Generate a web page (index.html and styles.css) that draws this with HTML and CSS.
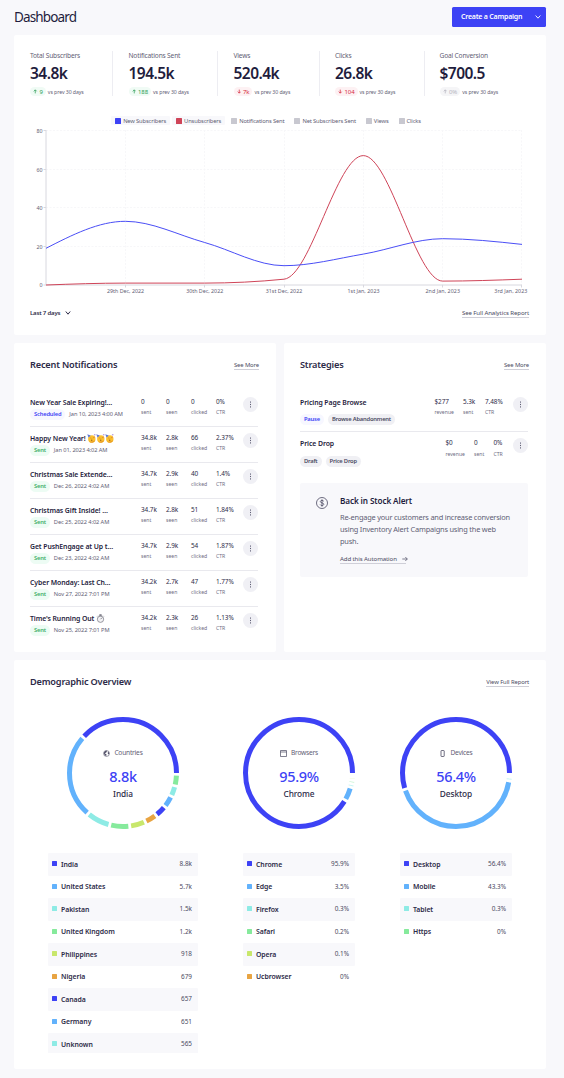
FILE: index.html
```html
<!DOCTYPE html>
<html lang="en">
<head>
<meta charset="utf-8">
<title>Dashboard</title>
<link rel="stylesheet" href="styles.css">
</head>
<body>
<svg class="defs" aria-hidden="true">
  <symbol id="party" viewBox="0 0 18 18">
    <circle cx="9.600" cy="9.800" r="7.400" fill="#fbc02f"/>
    <path d="M4 15a7.200 7.200 0 0 0 12.500-3c-3 3-8 4-12.500 3z" fill="#e79a24"/>
    <path d="M.5.500L7.500 3 3 7z" fill="#5d78d6"/>
    <path d="M13.500 1l3.500-.5-1 3z" fill="#8d6bd0"/>
    <path d="M6.500 8.500q1.200-1.500 2.400 0M11.500 8q1.200-1.500 2.400 0" fill="none" stroke="#a8691c" stroke-width="1"/>
    <circle cx="9.500" cy="12.500" r="1.300" fill="#9a5a1a"/>
    <circle cx="15" cy="6" r="1" fill="#e2774c"/>
  </symbol>
  <symbol id="watch" viewBox="0 0 16 16">
    <circle cx="8" cy="9.300" r="5.600" fill="#f4f4f6" stroke="#85858f" stroke-width="1.500"/>
    <path d="M6.500 1h3v2.500h-3zM12.500 3l1.500 1.500M3.500 3L2 4.500" fill="#85858f" stroke="#85858f" stroke-width="1.200"/>
    <path d="M8 9.300L10.800 6.500" stroke="#55555f" stroke-width="1.200"/>
  </symbol>
  <symbol id="dots" viewBox="0 0 15 15">
    <path d="M7.500 4.500v1.200M7.500 6.900v1.200M7.500 9.300v1.200" stroke="#5f5e75" stroke-width="1"/>
  </symbol>
  <symbol id="up" viewBox="0 0 6 6"><path d="M3 5.500V.8M1 2.800L3 .8l2 2" fill="none" stroke="currentColor"/></symbol>
  <symbol id="down" viewBox="0 0 6 6"><path d="M3 .5v4.700M1 3.200l2 2 2-2" fill="none" stroke="currentColor"/></symbol>
</svg>

<header class="topbar">
  <h1>Dashboard</h1>
  <button class="create"><span>Create a Campaign</span><svg width="6" height="6" viewBox="0 0 6 6"><path d="M.6 1.500L3 4.200 5.400 1.500" fill="none" stroke="#fff" stroke-width=".9"/></svg></button>
</header>

<main>
<section class="card analytics">
  <div class="kpis">
    <div class="kpi k1"><p>Total Subscribers</p><strong>34.8k</strong><div class="trend good"><b><svg><use href="#up"/></svg>9</b><span>vs prev 30 days</span></div></div>
    <div class="kpi k2"><p>Notifications Sent</p><strong>194.5k</strong><div class="trend good"><b><svg><use href="#up"/></svg>188</b><span>vs prev 30 days</span></div></div>
    <div class="kpi k3"><p>Views</p><strong>520.4k</strong><div class="trend bad"><b><svg><use href="#down"/></svg>7k</b><span>vs prev 30 days</span></div></div>
    <div class="kpi k4"><p>Clicks</p><strong>26.8k</strong><div class="trend bad"><b><svg><use href="#down"/></svg>104</b><span>vs prev 30 days</span></div></div>
    <div class="kpi k5"><p>Goal Conversion</p><strong>$700.5</strong><div class="trend flat"><b><svg><use href="#up"/></svg>0%</b><span>vs prev 30 days</span></div></div>
  </div>
  <div class="legend">
    <span class="on"><i class="c-blue"></i>New Subscribers</span>
    <span class="on"><i class="c-red"></i>Unsubscribers</span>
    <span><i></i>Notifications Sent</span>
    <span><i></i>Net Subscribers Sent</span>
    <span><i></i>Views</span>
    <span><i></i>Clicks</span>
  </div>
  <svg class="chart" viewBox="30 126 500 172">
    <g class="gridlines">
      <path d="M46 130.500H522M46 169.500H522M46 207.500H522M46 246.500H522M125.500 130V285M204.500 130V285M284.500 130V285M363.500 130V285M442.500 130V285M521.500 130V285"/>
    </g>
    <path class="axis" d="M46 130V285H522M43.500 130.500H46M43.500 169.500H46M43.500 207.500H46M43.500 246.500H46M43.500 285H46M125.500 285v2.500M204.500 285v2.500M284.500 285v2.500M363.500 285v2.500M442.500 285v2.500M521.500 285v2.500"/>
    <path class="line red" d="M46 285C72.400 284 98.900 283.100 125.300 283.100L204.700 283.100C231.100 283.100 257.600 281.800 284 279.200C310.400 276.600 336.900 155.600 363.300 155.600C389.800 155.600 416.200 281.100 442.700 281.100C469.100 281.100 495.600 280.200 522 279.200"/>
    <path class="line blue" d="M46 248.300C72.400 234.800 98.900 221.300 125.300 221.300C151.800 221.300 178.200 235.100 204.700 242.500C231.100 249.900 257.600 265.700 284 265.700C310.400 265.700 336.900 258.600 363.300 254.100C389.800 249.600 416.200 238.700 442.700 238.700C469.100 238.700 495.600 241.500 522 244.400"/>
    <g class="ylab">
      <text x="42.500" y="133">80</text><text x="42.500" y="171.500">60</text><text x="42.500" y="210">40</text><text x="42.500" y="249">20</text><text x="42.500" y="287.200">0</text>
    </g>
    <g class="xlab">
      <text x="125.500" y="293" textLength="37">29th Dec, 2022</text><text x="204.700" y="293" textLength="37">30th Dec, 2022</text><text x="284" y="293" textLength="36.500">31st Dec, 2022</text><text x="363.500" y="293" textLength="32">1st Jan, 2023</text><text x="442.700" y="293" textLength="34.500">2nd Jan, 2023</text><text x="510.800" y="293" textLength="33">3rd Jan, 2023</text>
    </g>
  </svg>
  <div class="cardfoot">
    <span class="range">Last 7 days<svg width="6" height="6" viewBox="0 0 6 6"><path d="M.8 1.500L3 4.200 5.200 1.500" fill="none" stroke="#2d2b48"/></svg></span>
    <a class="link">See Full Analytics Report</a>
  </div>
</section>

<div class="pair">
<section class="card">
  <div class="head"><h2>Recent Notifications</h2><a class="link">See More</a></div>
  <ul class="rows">
    <li><div class="info"><h3>New Year Sale Expiring!…</h3><p><b class="tag sched">Scheduled</b>Jan 10, 2023 4:00 AM</p></div><dl><div><dt>0</dt><dd>sent</dd></div><div><dt>0</dt><dd>seen</dd></div><div><dt>0</dt><dd>clicked</dd></div><div><dt>0%</dt><dd>CTR</dd></div></dl><svg class="more"><use href="#dots"/></svg></li>
    <li><div class="info"><h3>Happy New Year! <svg class="emo"><use href="#party"/></svg><svg class="emo"><use href="#party"/></svg><svg class="emo"><use href="#party"/></svg></h3><p><b class="tag sent">Sent</b>Jan 01, 2023 4:02 AM</p></div><dl><div><dt>34.8k</dt><dd>sent</dd></div><div><dt>2.8k</dt><dd>seen</dd></div><div><dt>66</dt><dd>clicked</dd></div><div><dt>2.37%</dt><dd>CTR</dd></div></dl><svg class="more"><use href="#dots"/></svg></li>
    <li><div class="info"><h3>Christmas Sale Extende…</h3><p><b class="tag sent">Sent</b>Dec 26, 2022 4:02 AM</p></div><dl><div><dt>34.7k</dt><dd>sent</dd></div><div><dt>2.9k</dt><dd>seen</dd></div><div><dt>40</dt><dd>clicked</dd></div><div><dt>1.4%</dt><dd>CTR</dd></div></dl><svg class="more"><use href="#dots"/></svg></li>
    <li><div class="info"><h3>Christmas Gift Inside! …</h3><p><b class="tag sent">Sent</b>Dec 25, 2022 4:02 AM</p></div><dl><div><dt>34.7k</dt><dd>sent</dd></div><div><dt>2.8k</dt><dd>seen</dd></div><div><dt>51</dt><dd>clicked</dd></div><div><dt>1.84%</dt><dd>CTR</dd></div></dl><svg class="more"><use href="#dots"/></svg></li>
    <li><div class="info"><h3>Get PushEngage at Up t…</h3><p><b class="tag sent">Sent</b>Dec 23, 2022 4:02 AM</p></div><dl><div><dt>34.7k</dt><dd>sent</dd></div><div><dt>2.9k</dt><dd>seen</dd></div><div><dt>54</dt><dd>clicked</dd></div><div><dt>1.87%</dt><dd>CTR</dd></div></dl><svg class="more"><use href="#dots"/></svg></li>
    <li><div class="info"><h3>Cyber Monday: Last Ch…</h3><p><b class="tag sent">Sent</b>Nov 27, 2022 7:01 PM</p></div><dl><div><dt>34.2k</dt><dd>sent</dd></div><div><dt>2.7k</dt><dd>seen</dd></div><div><dt>47</dt><dd>clicked</dd></div><div><dt>1.77%</dt><dd>CTR</dd></div></dl><svg class="more"><use href="#dots"/></svg></li>
    <li><div class="info"><h3>Time's Running Out <svg class="emo"><use href="#watch"/></svg></h3><p><b class="tag sent">Sent</b>Nov 25, 2022 7:01 PM</p></div><dl><div><dt>34.2k</dt><dd>sent</dd></div><div><dt>2.3k</dt><dd>seen</dd></div><div><dt>26</dt><dd>clicked</dd></div><div><dt>1.13%</dt><dd>CTR</dd></div></dl><svg class="more"><use href="#dots"/></svg></li>
  </ul>
</section>

<section class="card">
  <div class="head"><h2>Strategies</h2><a class="link">See More</a></div>
  <ul class="rows strat">
    <li class="s1"><div class="info"><h3>Pricing Page Browse</h3><p><b class="tag sched">Pause</b><b class="tag gray">Browse Abandonment</b></p></div><dl><div><dt>$277</dt><dd>revenue</dd></div><div><dt>5.3k</dt><dd>sent</dd></div><div><dt>7.48%</dt><dd>CTR</dd></div></dl><svg class="more"><use href="#dots"/></svg></li>
    <li class="s2"><div class="info"><h3>Price Drop</h3><p><b class="tag gray">Draft</b><b class="tag gray">Price Drop</b></p></div><dl><div><dt>$0</dt><dd>revenue</dd></div><div><dt>0</dt><dd>sent</dd></div><div><dt>0%</dt><dd>CTR</dd></div></dl><svg class="more"><use href="#dots"/></svg></li>
  </ul>
  <div class="promo">
    <svg width="12" height="12" viewBox="0 0 12 12" fill="none" stroke="#4b4a62" stroke-width=".8"><circle cx="6" cy="6" r="5.500"/><path d="M7.800 4.300C7.300 3.200 4.400 3 4.300 4.600 4.300 6.300 7.800 5.500 7.800 7.300 7.700 9 4.500 8.800 4.100 7.500M6 2.300v7.400"/></svg>
    <div>
      <h3>Back in Stock Alert</h3>
      <p>Re-engage your customers and increase conversion<br>using Inventory Alert Campaigns using the web<br>push.</p>
      <a class="link">Add this Automation<svg width="6" height="6" viewBox="0 0 6 6"><path d="M.3 3h5M3.300 1l2 2-2 2" fill="none" stroke="#4b4a62" stroke-width=".7"/></svg></a>
    </div>
  </div>
</section>
</div>

<section class="card demo">
  <div class="head"><h2>Demographic Overview</h2><a class="link">View Full Report</a></div>
  <div class="cols">
    <div class="col">
      <div class="donut">
        <svg viewBox="-56 -56 112 112"><g transform="scale(1 -1)">
          <circle class="s-blue" r="53.500" pathLength="360" stroke-dasharray="136.500 360"/>
          <circle class="s-sky" r="53.500" pathLength="360" stroke-dasharray="88.400 360" stroke-dashoffset="-139.500"/>
          <circle class="s-teal" r="53.500" pathLength="360" stroke-dasharray="23.300 360" stroke-dashoffset="-230.900"/>
          <circle class="s-green" r="53.500" pathLength="360" stroke-dasharray="18.600 360" stroke-dashoffset="-257.200"/>
          <circle class="s-lime" r="53.500" pathLength="360" stroke-dasharray="14.200 360" stroke-dashoffset="-278.800"/>
          <circle class="s-orange" r="53.500" pathLength="360" stroke-dasharray="10.500 360" stroke-dashoffset="-296"/>
          <circle class="s-blue" r="53.500" pathLength="360" stroke-dasharray="10.200 360" stroke-dashoffset="-309.500"/>
          <circle class="s-sky" r="53.500" pathLength="360" stroke-dasharray="10.100 360" stroke-dashoffset="-322.700"/>
          <circle class="s-teal" r="53.500" pathLength="360" stroke-dasharray="8.800 360" stroke-dashoffset="-335.800"/>
          <circle class="s-green" r="53.500" pathLength="360" stroke-dasharray="9.400 360" stroke-dashoffset="-347.600"/>
        </g></svg>
        <div class="mid"><span><svg width="7" height="7" viewBox="0 0 14 14"><circle cx="7" cy="7" r="5.900" fill="#fff" stroke="#4b4a62" stroke-width="1.100"/><path d="M1.500 5.500L5 1.500 8 1.500 7 4.500 4.500 6 4.500 8 7 8.500 6.500 12 3.500 10.500zM10 3l2.500 3-1 3-2-2z" fill="#4b4a62"/></svg>Countries</span><strong>8.8k</strong><em>India</em></div>
      </div>
      <ul class="legendlist">
        <li><i class="c-blue"></i><b>India</b><span>8.8k</span></li>
        <li><i class="c-sky"></i><b>United States</b><span>5.7k</span></li>
        <li><i class="c-teal"></i><b>Pakistan</b><span>1.5k</span></li>
        <li><i class="c-green"></i><b>United Kingdom</b><span>1.2k</span></li>
        <li><i class="c-lime"></i><b>Philippines</b><span>918</span></li>
        <li><i class="c-orange"></i><b>Nigeria</b><span>679</span></li>
        <li><i class="c-blue"></i><b>Canada</b><span>657</span></li>
        <li><i class="c-sky"></i><b>Germany</b><span>651</span></li>
        <li><i class="c-teal"></i><b>Unknown</b><span>565</span></li>
      </ul>
    </div>
    <div class="col">
      <div class="donut">
        <svg viewBox="-56 -56 112 112"><g transform="scale(1 -1)">
          <circle class="s-blue" r="53.500" pathLength="360" stroke-dasharray="328 360"/>
          <circle class="s-sky" r="53.500" pathLength="360" stroke-dasharray="12 360" stroke-dashoffset="-331"/>
          <circle class="s-teal faint" r="53.500" pathLength="360" stroke-dasharray="1 360" stroke-dashoffset="-346"/>
          <circle class="s-green faint" r="53.500" pathLength="360" stroke-dasharray=".7 360" stroke-dashoffset="-350"/>
          <circle class="s-lime faint" r="53.500" pathLength="360" stroke-dasharray=".4 360" stroke-dashoffset="-353.700"/>
        </g></svg>
        <div class="mid"><span><svg width="7" height="7" viewBox="0 0 7 7"><path d="M.5.5h6v6h-6zM.5 2h6" fill="none" stroke="#4b4a62" stroke-width=".7"/></svg>Browsers</span><strong>95.9%</strong><em>Chrome</em></div>
      </div>
      <ul class="legendlist">
        <li><i class="c-blue"></i><b>Chrome</b><span>95.9%</span></li>
        <li><i class="c-sky"></i><b>Edge</b><span>3.5%</span></li>
        <li><i class="c-teal"></i><b>Firefox</b><span>0.3%</span></li>
        <li><i class="c-green"></i><b>Safari</b><span>0.2%</span></li>
        <li><i class="c-lime"></i><b>Opera</b><span>0.1%</span></li>
        <li><i class="c-orange"></i><b>Ucbrowser</b><span>0%</span></li>
      </ul>
    </div>
    <div class="col">
      <div class="donut">
        <svg viewBox="-56 -56 112 112"><g transform="scale(1 -1)">
          <circle class="s-blue" r="53.500" pathLength="360" stroke-dasharray="196.300 360"/>
          <circle class="s-sky" r="53.500" pathLength="360" stroke-dasharray="150.700 360" stroke-dashoffset="-199.300"/>
          <circle class="s-teal faint" r="53.500" pathLength="360" stroke-dasharray="1 360" stroke-dashoffset="-353"/>
        </g></svg>
        <div class="mid"><span><svg width="7" height="7" viewBox="0 0 7 7"><rect x="2" y=".5" width="3.200" height="6" rx=".5" fill="none" stroke="#4b4a62" stroke-width=".8"/></svg>Devices</span><strong>56.4%</strong><em>Desktop</em></div>
      </div>
      <ul class="legendlist">
        <li><i class="c-blue"></i><b>Desktop</b><span>56.4%</span></li>
        <li><i class="c-sky"></i><b>Mobile</b><span>43.3%</span></li>
        <li><i class="c-teal"></i><b>Tablet</b><span>0.3%</span></li>
        <li><i class="c-green"></i><b>Https</b><span>0%</span></li>
      </ul>
    </div>
  </div>
</section>
</main>
</body>
</html>
```
FILE: styles.css
```css
* { box-sizing: border-box; margin: 0; padding: 0; }
body {
  width: 564px; height: 1078px; overflow: hidden;
  background: #f8f8fb; color: #1f1d3d;
  font-family: "Noto Sans", "Open Sans", sans-serif;
  font-size: 6.500px; line-height: 10px; letter-spacing: 0;
  white-space: nowrap;
}
ul { list-style: none; }
svg { display: block; flex: none; }
.defs { width: 0; height: 0; position: absolute; }
em, i { font-style: normal; }

.topbar { display: flex; justify-content: space-between; align-items: center; height: 35px; padding: 0 18px 2px 14px; }
.create { margin-top: 1px; }
h1 { font-size: 13.500px; font-weight: 400; line-height: 16px; letter-spacing: -0.063em; }
.create {
  display: flex; align-items: center; width: 94px; height: 20px; border: 0; border-radius: 1.500px;
  background: #3d42f5; color: #fff; font: 600 7px/20px "Noto Sans", sans-serif; letter-spacing: -0.03em;
}
.create span { width: 83px; padding-left: 9px; text-align: left; }

main { display: flex; flex-direction: column; gap: 8px; padding: 0 18px 0 14px; }
.card { background: #fff; border-radius: 2px; }
.analytics { height: 300px; padding: 16px 17px 0 16px; }

.kpis { display: flex; height: 45px; }
.kpi { padding-left: 15.500px; border-right: 1px solid #ededf2; }
.kpi p { font-size: 6.600px; line-height: 10px; color: #5f5e75; letter-spacing: -0.025em; }
.kpi strong { display: block; font-size: 15.500px; line-height: 25px; height: 26px; font-weight: 600; letter-spacing: -0.035em; }
.k1 { width: 83px; padding-left: 0; }
.k2 { width: 105px; }
.k3 { width: 102px; }
.k4 { width: 105px; padding-left: 15px; }
.kpi.k5 { border: 0; padding-left: 14.500px; }
.trend { display: flex; align-items: center; gap: 2px; height: 9px; font-size: 5.200px; color: #5f5e75; letter-spacing: -0.015em; }
.trend b { display: flex; align-items: center; gap: 2px; height: 9px; padding: 0 3px; border-radius: 5px; font-weight: 400; font-size: 6px; }
.trend b svg { width: 4.500px; height: 5px; }
.good b { background: #f0fbf5; color: #2f9e55; }
.bad b { background: #fdf1f3; color: #d6293e; }
.flat b { background: #f5f5f7; color: #b4b3bf; }

.legend { display: flex; justify-content: center; gap: 2px; margin-top: 20px; height: 9px; padding-right: 23px; }
.legend span { display: flex; align-items: center; gap: 2px; height: 9px; padding: 0 4px; border-radius: 1px; font-size: 5.800px; letter-spacing: -0.028em; color: #5f5e75; }
.legend .on { background: #f8f8fb; }
.legend i { width: 6px; height: 6px; border-radius: .5px; background: #c8c8d0; }
.legend .c-blue, .c-blue { background: #3d42f5; }
.legend .c-red { background: #cf4458; }
.c-sky { background: #62b2fc; }
.c-teal { background: #8eebe5; }
.c-green { background: #86ea9c; }
.c-lime { background: #c8e76c; }
.c-orange { background: #e8a442; }

.chart { width: 500px; height: 172px; margin-top: 1px; overflow: visible; }
.gridlines path { stroke: #f7f7f9; stroke-dasharray: 2 1.500; fill: none; stroke-width: 1; }
.axis { stroke: #d8d8df; fill: none; stroke-width: 1; }
.line { fill: none; stroke-width: 1; }
.line.red { stroke: #cf4458; }
.line.blue { stroke: #4a4ef6; }
.chart text { font-size: 5.300px; fill: #5f5e75; }
.ylab { text-anchor: end; }
.xlab { text-anchor: middle; }

.cardfoot { display: flex; justify-content: space-between; margin-top: 10px; }
.range { display: flex; align-items: center; gap: 4.500px; height: 9px; font-weight: 600; font-size: 6px; letter-spacing: -0.03em; color: #2d2b48; }
.link { display: flex; align-items: center; gap: 5px; height: 10px; font-size: 6.100px; letter-spacing: -0.018em; color: #4b4a62; border-bottom: 1px solid #cfcfd8; }

.pair { display: grid; grid-template-columns: 262px 262px; gap: 8px; }
.pair .card { height: 309px; padding: 16px 17px 0 16px; }
.head { display: flex; justify-content: space-between; align-items: center; height: 12px; }
h2 { font-size: 9.200px; line-height: 12px; font-weight: 600; color: #2d2b48; letter-spacing: -0.02em; }
.head .link { height: 9px; line-height: 8px; font-size: 5.900px; }

.rows { width: 228px; margin-top: 20px; }
.rows li { display: flex; height: 36px; padding-top: 6px; border-bottom: 1px solid #e9e9ee; }
.rows li:last-child { border: 0; }
.info { width: 111px; }
h3 { display: flex; align-items: center; font-size: 6.900px; font-weight: 600; line-height: 11px; height: 11px; letter-spacing: -0.013em; white-space: pre; color: #1f1d3d; }
.emo { width: 9px; height: 9px; }
.info p { display: flex; gap: 4px; margin-top: 1px; font-size: 5.700px; line-height: 10px; letter-spacing: -0.015em; color: #5f5e75; }
.tag { height: 11px; padding: 0 4px; border-radius: 5.500px; font-size: 5.800px; font-weight: 600; line-height: 11.500px; letter-spacing: -0.035em; }
.sched { background: #f7f7ff; color: #3d42f5; }
.sent { background: #edfcf4; color: #3fae66; }
.gray { background: #f0f0f4; color: #4b4a62; }
dl { display: grid; grid-template-columns: repeat(4, 25px); width: 102px; }
dt { font-size: 6.400px; line-height: 10px; letter-spacing: -0.01em; color: #2d2b48; }
dd { font-size: 5.100px; line-height: 10px; color: #6d6c82; }
.more { width: 15px; height: 15px; border-radius: 50%; background: #f0f0f5; }

.strat .info { width: 134.500px; }
.strat .info p { margin-top: 6px; }
.strat .s1 { height: 41px; }
.strat .s1 dl { grid-template-columns: 28.500px 22px auto; width: 78.500px; }
.strat .s2 { height: 51px; }
.strat .s2 .info { width: 145.500px; }
.strat .s2 .info p { margin-top: 7px; }
.strat .s2 dl { grid-template-columns: 28.500px 19.500px auto; width: 67.500px; }
.strat .s2 dd { margin-top: .5px; }

.promo { display: flex; gap: 12px; width: 228px; height: 94px; padding: 13px 0 0 16px; background: #f8f8fb; border-radius: 2px; }
.promo > svg { margin-top: 1px; }
.promo h3 { font-size: 8.200px; line-height: 10px; height: 10px; letter-spacing: -0.015em; }
.promo p { margin-top: 5px; font-size: 7.400px; line-height: 12px; letter-spacing: -0.027em; color: #5f5e75; }
.promo .link { width: 66px; margin-top: 7px; height: 10px; }

.demo { height: 409px; padding: 16px 17px 0 16px; }
.cols { display: grid; grid-template-columns: 150px 112px 112px; gap: 45px; padding: 29px 0 0 18px; }
.donut { display: grid; width: 112px; height: 112px; margin: 0 auto; }
.donut > svg, .mid { grid-area: 1 / 1; }
.donut circle { stroke-width: 5; }
.donut g circle { fill: none; }
.mid circle { stroke-width: 1.100; }
.s-blue { stroke: #3d42f5; }
.s-sky { stroke: #62b2fc; }
.s-teal { stroke: #8eebe5; }
.s-green { stroke: #86ea9c; }
.s-lime { stroke: #c8e76c; }
.s-orange { stroke: #e8a442; }
.donut .faint { opacity: .5; }
.donut .mid circle { stroke-width: 1.100; }
.mid { display: flex; flex-direction: column; align-items: center; padding-top: 31px; }
.mid span { display: flex; align-items: center; gap: 4px; font-size: 6.600px; letter-spacing: -0.03em; color: #5f5e75; }
.mid strong { margin-top: 9px; font-size: 14.500px; font-weight: 500; line-height: 18px; color: #3d42f5; letter-spacing: -0.02em; }
.mid em { margin-top: 4px; font-size: 8.300px; font-weight: 500; line-height: 10px; letter-spacing: -0.01em; color: #2d2b48; }
.legendlist { height: 200px; margin-top: 24px; overflow: hidden; }
.legendlist li { display: flex; align-items: center; height: 22.500px; padding: 0 6px 0 4px; border-radius: 1px; }
.legendlist li:nth-child(odd) { background: #f8f8fb; }
.legendlist i { width: 5px; height: 5px; margin: -1px 4px 0 0; border-radius: .5px; }
.legendlist b { flex: 1; padding-top: 1px; font-size: 6.900px; font-weight: 600; letter-spacing: -0.01em; color: #2d2b48; }
.legendlist span { font-size: 6.400px; color: #4b4a62; }
```
